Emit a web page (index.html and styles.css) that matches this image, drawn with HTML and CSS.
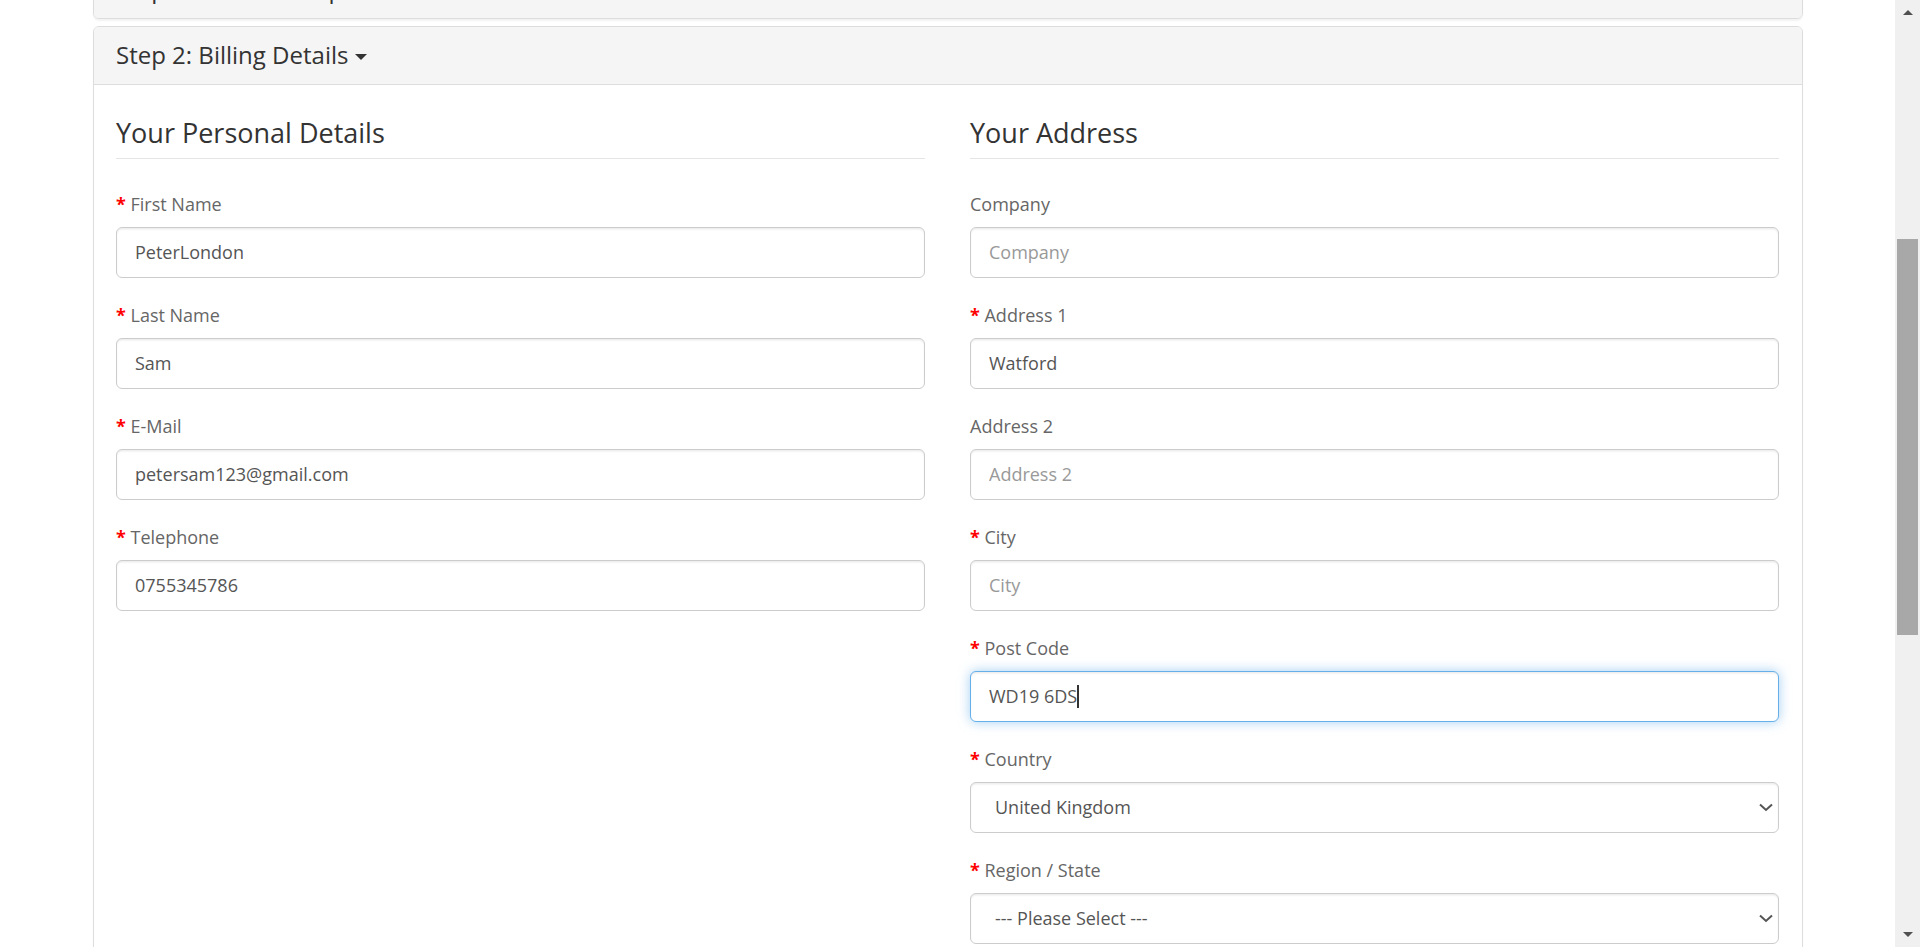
FILE: index.html
```html
<!DOCTYPE html>
<html lang="en">
<head>
<meta charset="utf-8">
<title>Checkout</title>
<link rel="stylesheet" href="styles.css">
</head>
<body>
<div class="page">
  <div class="viewport">
    <div class="container">
      <div class="panel-group">
        <div class="panel">
          <div class="panel-heading">
            <h4 class="panel-title">Step 1: Checkout Options <span class="caret"></span></h4>
          </div>
        </div>
        <div class="panel">
          <div class="panel-heading">
            <h4 class="panel-title">Step 2: Billing Details <span class="caret"></span></h4>
          </div>
          <div class="panel-body">
            <div class="row">
              <div class="col">
                <div class="legend">Your Personal Details</div>
                <div class="form-group">
                  <label class="label required">First Name</label>
                  <input class="form-control" type="text" value="PeterLondon" placeholder="First Name">
                </div>
                <div class="form-group">
                  <label class="label required">Last Name</label>
                  <input class="form-control" type="text" value="Sam" placeholder="Last Name">
                </div>
                <div class="form-group">
                  <label class="label required">E-Mail</label>
                  <input class="form-control" type="text" value="petersam123@gmail.com" placeholder="E-Mail">
                </div>
                <div class="form-group">
                  <label class="label required">Telephone</label>
                  <input class="form-control" type="text" value="0755345786" placeholder="Telephone">
                </div>
              </div>
              <div class="col">
                <div class="legend">Your Address</div>
                <div class="form-group">
                  <label class="label">Company</label>
                  <input class="form-control" type="text" value="" placeholder="Company">
                </div>
                <div class="form-group">
                  <label class="label required">Address 1</label>
                  <input class="form-control" type="text" value="Watford" placeholder="Address 1">
                </div>
                <div class="form-group">
                  <label class="label">Address 2</label>
                  <input class="form-control" type="text" value="" placeholder="Address 2">
                </div>
                <div class="form-group">
                  <label class="label required">City</label>
                  <input class="form-control" type="text" value="" placeholder="City">
                </div>
                <div class="form-group">
                  <label class="label required">Post Code</label>
                  <div class="form-control focused">WD19 6DS<span class="text-caret"></span></div>
                </div>
                <div class="form-group">
                  <label class="label required">Country</label>
                  <div class="select-wrap">
                    <select class="form-control select">
                      <option>United Kingdom</option>
                    </select>
                    <svg class="chevron" width="14" height="9" viewBox="0 0 14 9"><path d="M1 1.5 L7 7 L13 1.5" fill="none" stroke="#555" stroke-width="2"/></svg>
                  </div>
                </div>
                <div class="form-group">
                  <label class="label required">Region / State</label>
                  <div class="select-wrap">
                    <select class="form-control select">
                      <option>--- Please Select ---</option>
                    </select>
                    <svg class="chevron" width="14" height="9" viewBox="0 0 14 9"><path d="M1 1.5 L7 7 L13 1.5" fill="none" stroke="#555" stroke-width="2"/></svg>
                  </div>
                </div>
              </div>
            </div>
          </div>
        </div>
      </div>
    </div>
  </div>
  <div class="scrollbar">
    <div class="sb-arrow sb-up"></div>
    <div class="sb-track"><div class="sb-thumb"></div></div>
    <div class="sb-arrow sb-down"></div>
  </div>
</div>
</body>
</html>
```
FILE: styles.css
```css
* { box-sizing: border-box; }
html, body { margin: 0; padding: 0; }
body {
  font-family: "Open Sans", "Noto Sans", sans-serif;
  font-size: 18px;
  line-height: 30px;
  color: #666;
  background: #fff;
  overflow: hidden;
}
.page {
  display: flex;
  height: 947px;
  overflow: hidden;
}
.viewport {
  flex: 1;
  overflow: hidden;
}
.container {
  width: 1755px;
  margin: -39.5px auto 0;
  padding: 0 22.5px;
}
.panel {
  background: #fff;
  border: 1px solid #ddd;
  border-radius: 6px;
  box-shadow: 0 1.5px 1.5px rgba(0,0,0,.05);
  overflow: hidden;
}
.panel + .panel { margin-top: 7.5px; }
.panel-heading {
  background: #f5f5f5;
  padding: 14.5px 22.5px;
  border-bottom: 1px solid transparent;
}
.panel-title {
  margin: 0;
  font-size: 24px;
  line-height: 26.4px;
  font-weight: 400;
  color: #333;
}
.caret {
  display: inline-block;
  width: 0;
  height: 0;
  margin-left: 0;
  vertical-align: middle;
  border-top: 6px solid #333;
  border-left: 6px solid transparent;
  border-right: 6px solid transparent;
}
.panel-body {
  border-top: 1px solid #ddd;
  padding: 22.5px;
}
.row {
  display: flex;
  margin: 0 -22.5px;
}
.col {
  flex: 0 0 50%;
  padding: 0 22.5px;
}
.legend {
  font-size: 27px;
  line-height: 30px;
  padding: 10.5px 0;
  color: #333;
  border-bottom: 1px solid #e5e5e5;
  margin-bottom: 30px;
}
.form-group { margin-bottom: 22.5px; }
.label {
  display: block;
  margin-bottom: 7.5px;
  font-size: 18px;
  line-height: 30px;
  color: #666;
}
.label.required::before {
  content: "* ";
  color: #f00;
  font-weight: bold;
}
.form-control {
  display: block;
  width: 100%;
  height: 51px;
  padding: 9px 18px;
  font-family: inherit;
  font-size: 18px;
  line-height: 30px;
  color: #555;
  background: #fff;
  border: 1px solid #ccc;
  border-radius: 6px;
  box-shadow: inset 0 1.5px 1.5px rgba(0,0,0,.075);
  outline: none;
}
.form-control::placeholder { color: #999; }
.form-control.focused {
  border-color: #66afe9;
  box-shadow: inset 0 1.5px 1.5px rgba(0,0,0,.075), 0 0 12px rgba(102,175,233,.6);
}
.text-caret {
  display: inline-block;
  width: 2px;
  height: 23px;
  background: #333;
  vertical-align: -5px;
}
.select-wrap { position: relative; }
.select {
  -webkit-appearance: none;
  appearance: none;
  padding-left: 24px;
}
.chevron {
  position: absolute;
  right: 6px;
  top: 21px;
  pointer-events: none;
}
.scrollbar {
  flex: 0 0 25px;
  background: #f0f0f0;
  display: flex;
  flex-direction: column;
  align-items: center;
}
.sb-arrow {
  flex: 0 0 25px;
  width: 100%;
  display: flex;
  align-items: center;
  justify-content: center;
}
.sb-up::before, .sb-down::before {
  content: "";
  width: 0; height: 0;
  border-left: 5px solid transparent;
  border-right: 5px solid transparent;
}
.sb-up::before { border-bottom: 5px solid #505050; }
.sb-down::before { border-top: 5px solid #505050; }
.sb-track {
  flex: 1;
  width: 100%;
  padding: 214px 2px 0;
}
.sb-thumb {
  height: 396px;
  background: #a8a8a8;
}
```
